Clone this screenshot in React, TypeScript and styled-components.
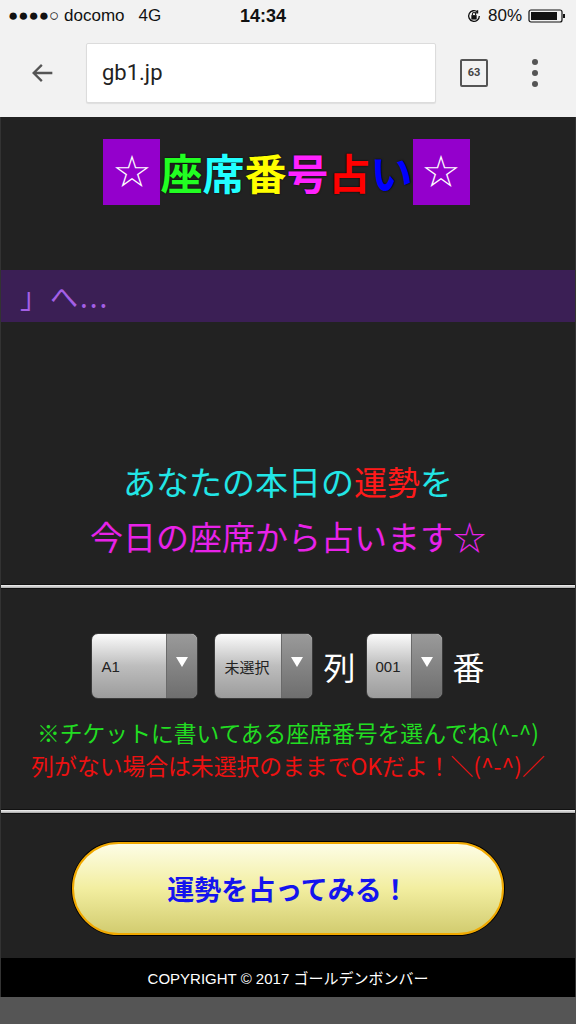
import React from "react";
import styled, { createGlobalStyle } from "styled-components";

const GlobalStyle = createGlobalStyle`
    html, body {
        margin: 0;
        padding: 0;
        background: #555555;
    }
    body {
        font-family: "Noto Sans CJK JP", "Liberation Sans", sans-serif;
    }
`;

const Phone = styled.div`
    width: 576px;
    height: 1024px;
    display: flex;
    flex-direction: column;
    overflow: hidden;
    background: #555555;
`;

const StatusBar = styled.div`
    height: 32px;
    background: #f2f2f2;
    display: flex;
    align-items: center;
    justify-content: space-between;
    padding: 0 8px;
    font-family: "Liberation Sans", sans-serif;
    font-size: 17px;
    color: #111;
    position: relative;
`;

const StatusLeft = styled.div`
    display: flex;
    align-items: center;
    gap: 14px;
`;

const Clock = styled.div`
    position: absolute;
    left: 0;
    right: 50px;
    text-align: center;
    font-weight: 600;
    font-size: 18px;
    pointer-events: none;
`;

const StatusRight = styled.div`
    display: flex;
    align-items: center;
    gap: 6px;
`;

const Toolbar = styled.div`
    height: 85px;
    box-sizing: border-box;
    background: #f2f2f2;
    display: flex;
    align-items: center;
    padding: 0 0 4px 0;
`;

const BackButton = styled.div`
    width: 86px;
    display: flex;
    justify-content: center;
    align-items: center;
`;

const UrlField = styled.div`
    width: 350px;
    height: 60px;
    box-sizing: border-box;
    background: #fff;
    border: 1px solid #dcdcdc;
    border-radius: 2px;
    box-shadow: 0 1px 1px rgba(0, 0, 0, 0.08);
    display: flex;
    align-items: center;
    padding-left: 15px;
    font-family: "Roboto", "Liberation Sans", sans-serif;
    font-size: 22px;
    color: #222;
`;

const TabCount = styled.div`
    margin-left: 24px;
    width: 28px;
    height: 28px;
    box-sizing: border-box;
    border: 2px solid #555;
    border-radius: 2px;
    display: flex;
    align-items: center;
    justify-content: center;
    font-family: "Roboto", "Liberation Sans", sans-serif;
    font-size: 11px;
    font-weight: 700;
    color: #444;
`;

const MenuDots = styled.div`
    margin-left: 44px;
    display: flex;
    flex-direction: column;
    gap: 5px;
    span {
        width: 6px;
        height: 6px;
        border-radius: 50%;
        background: #555;
    }
`;

const Page = styled.div`
    background: #222222;
    display: flex;
    flex-direction: column;
    border-left: 1px solid #333;
    border-right: 1px solid #333;
`;

const TitleRow = styled.div`
    display: flex;
    justify-content: center;
    align-items: center;
    padding: 22px 0 0 0;
    height: 66px;
    margin-left: -3px;
`;

const StarBox = styled.div`
    width: 57px;
    height: 66px;
    background: #9400cc;
    color: #fff;
    display: flex;
    align-items: center;
    justify-content: center;
    font-size: 44px;
    font-family: "DejaVu Sans", sans-serif;
    line-height: 1;
`;

const TitleChar = styled.span<{ $color: string }>`
    color: ${(p) => p.$color};
    font-size: 42px;
    font-weight: 700;
    line-height: 1;
    text-shadow: 0 0 2px #000;
`;

const Band = styled.div`
    margin-top: 65px;
    height: 52px;
    background: #3b1f55;
    color: #a45fe6;
    font-size: 28px;
    letter-spacing: 2px;
    display: flex;
    align-items: center;
    padding-left: 19px;
    white-space: pre;
`;

const Intro = styled.div`
    padding: 132px 0 20px 0;
    text-align: center;
    font-size: 33px;
    line-height: 55px;
`;

const IntroLine = styled.div<{ $color: string }>`
    color: ${(p) => p.$color};
`;

const Red = styled.span`
    color: #ff1a1a;
`;

const Divider = styled.div`
    height: 5px;
    box-sizing: border-box;
    border-top: 1px solid #111;
    border-bottom: 1px solid #111;
    background: linear-gradient(#f4f4f4, #a8a8a8);
`;

const FormSection = styled.div`
    height: 220px;
    display: flex;
    flex-direction: column;
    align-items: center;
    padding-top: 44px;
    box-sizing: border-box;
`;

const SelectRow = styled.div`
    display: flex;
    align-items: center;
    gap: 10px;
`;

const Select = styled.div<{ $w: number; $gapAfter?: number }>`
    width: ${(p) => p.$w}px;
    height: 66px;
    margin-right: ${(p) => p.$gapAfter ?? 0}px;
    box-sizing: border-box;
    border: 1px solid #3a3a3a;
    border-radius: 7px;
    overflow: hidden;
    display: flex;
    background: linear-gradient(#fbfbfb, #bdbdbd 50%, #9c9c9c);
`;

const SelectValue = styled.div`
    flex: 1;
    display: flex;
    align-items: center;
    padding-left: 9px;
    font-size: 15px;
    color: #222;
    font-family: "Liberation Sans", "Noto Sans CJK JP", sans-serif;
`;

const SelectArrow = styled.div`
    width: 31px;
    border-left: 1px solid #6a6a6a;
    background: linear-gradient(#9a9a9a, #6e6e6e);
    display: flex;
    justify-content: center;
    padding-top: 23px;
    box-sizing: border-box;
    &::after {
        content: "";
        width: 0;
        height: 0;
        border-left: 6px solid transparent;
        border-right: 6px solid transparent;
        border-top: 10px solid #fff;
    }
`;

const Unit = styled.span`
    color: #fff;
    font-size: 32px;
`;

const Notes = styled.div`
    margin-top: 17px;
    text-align: center;
    font-size: 22.8px;
    line-height: 33px;
`;

const Note = styled.div<{ $color: string }>`
    color: ${(p) => p.$color};
    white-space: nowrap;
`;

const ButtonSection = styled.div`
    padding: 28px 0 23px 0;
    display: flex;
    justify-content: center;
`;

const FortuneButton = styled.button`
    width: 432px;
    height: 93px;
    border-radius: 47px;
    border: 2px solid #f0a800;
    box-shadow: 0 0 0 1px #000;
    background: linear-gradient(#fdfde6, #f2eea0 50%, #d2cc70);
    color: #1414ee;
    font-family: "Noto Sans CJK JP", sans-serif;
    font-size: 27px;
    font-weight: 700;
    cursor: pointer;
`;

const Footer = styled.div`
    height: 39px;
    background: #000;
    color: #fff;
    display: flex;
    align-items: center;
    justify-content: center;
    font-family: "Liberation Sans", "Noto Sans CJK JP", sans-serif;
    font-size: 15px;
`;

const BottomGray = styled.div`
    flex: 1;
    background: #555555;
`;

const titleChars: [string, string][] = [
    ["座", "#22ff22"],
    ["席", "#22ffff"],
    ["番", "#ffff00"],
    ["号", "#ff22ff"],
    ["占", "#ff0000"],
    ["い", "#0000ff"],
];

function App() {
    return (
        <Phone>
            <GlobalStyle />
            <StatusBar>
                <StatusLeft>
                    <span>●●●●○ docomo</span>
                    <span>4G</span>
                </StatusLeft>
                <Clock>14:34</Clock>
                <StatusRight>
                    <svg width="16" height="16" viewBox="0 0 18 18">
                        <path d="M15 9a6 6 0 1 1-2-4.5" fill="none" stroke="#111" strokeWidth="1.5" />
                        <path d="M13 2.5v3h-3" fill="none" stroke="#111" strokeWidth="1.5" />
                        <rect x="6" y="8" width="6" height="5" fill="#111" />
                        <path d="M7.2 8V6.8a1.8 1.8 0 0 1 3.6 0V8" fill="none" stroke="#111" strokeWidth="1.2" />
                    </svg>
                    <span>80%</span>
                    <svg width="40" height="18" viewBox="0 0 40 18">
                        <rect x="1" y="3" width="33" height="12" rx="2" fill="none" stroke="#111" strokeWidth="1.2" />
                        <rect x="3" y="5" width="26" height="8" fill="#111" />
                        <rect x="35" y="7" width="2" height="4" fill="#111" />
                    </svg>
                </StatusRight>
            </StatusBar>
            <Toolbar>
                <BackButton>
                    <svg width="28" height="28" viewBox="0 0 24 24">
                        <path d="M20 12H5M11 5l-7 7 7 7" fill="none" stroke="#555" strokeWidth="2" />
                    </svg>
                </BackButton>
                <UrlField>gb1.jp</UrlField>
                <TabCount>63</TabCount>
                <MenuDots>
                    <span />
                    <span />
                    <span />
                </MenuDots>
            </Toolbar>
            <Page>
                <TitleRow>
                    <StarBox>☆</StarBox>
                    {titleChars.map(([c, color]) => (
                        <TitleChar key={c} $color={color}>{c}</TitleChar>
                    ))}
                    <StarBox>☆</StarBox>
                </TitleRow>
                <Band>{"」へ..."}</Band>
                <Intro>
                    <IntroLine $color="#22e6e6">
                        あなたの本日の<Red>運勢</Red>を
                    </IntroLine>
                    <IntroLine $color="#e822e8">今日の座席から占います☆</IntroLine>
                </Intro>
                <Divider />
                <FormSection>
                    <SelectRow>
                        <Select $w={107} $gapAfter={6}>
                            <SelectValue>A1</SelectValue>
                            <SelectArrow />
                        </Select>
                        <Select $w={99}>
                            <SelectValue>未選択</SelectValue>
                            <SelectArrow />
                        </Select>
                        <Unit>列</Unit>
                        <Select $w={77}>
                            <SelectValue>001</SelectValue>
                            <SelectArrow />
                        </Select>
                        <Unit>番</Unit>
                    </SelectRow>
                    <Notes>
                        <Note $color="#22dd22">※チケットに書いてある座席番号を選んでね(^-^)</Note>
                        <Note $color="#ee1111">列がない場合は未選択のままでOKだよ！＼(^-^)／</Note>
                    </Notes>
                </FormSection>
                <Divider />
                <ButtonSection>
                    <FortuneButton>運勢を占ってみる！</FortuneButton>
                </ButtonSection>
                <Footer>COPYRIGHT © 2017 ゴールデンボンバー</Footer>
            </Page>
            <BottomGray />
        </Phone>
    );
}

export default App;
